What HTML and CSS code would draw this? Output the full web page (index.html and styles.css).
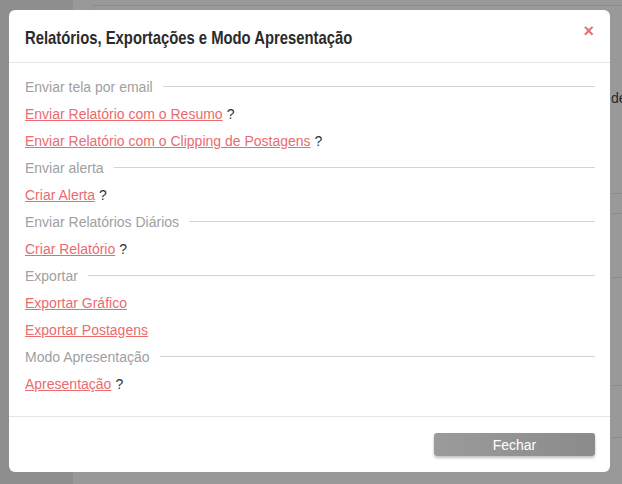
FILE: index.html
```html
<!DOCTYPE html>
<html lang="pt">
<head>
<meta charset="utf-8">
<title>Relatórios</title>
<link rel="stylesheet" href="styles.css">
</head>
<body>
<div class="page">
  <div class="side"></div>
  <div class="main">
    <div class="card">
      <div class="card-text">de</div>
      <div class="card-line l1"></div>
      <div class="card-line l2"></div>
      <div class="card-line l3"></div>
      <div class="card-line l4"></div>
      <div class="card-line l5"></div>
    </div>
  </div>
</div>
<div class="modal">
  <div class="modal-header">
    <h4 class="modal-title">Relatórios, Exportações e Modo Apresentação</h4>
    <span class="close">×</span>
  </div>
  <div class="modal-body">
    <div class="section"><span>Enviar tela por email</span><i class="rule"></i></div>
    <div class="row"><a class="link" href="#">Enviar Relatório com o Resumo</a> <span class="help">?</span></div>
    <div class="row"><a class="link" href="#">Enviar Relatório com o Clipping de Postagens</a> <span class="help">?</span></div>
    <div class="section"><span>Enviar alerta</span><i class="rule"></i></div>
    <div class="row"><a class="link" href="#">Criar Alerta</a> <span class="help">?</span></div>
    <div class="section"><span>Enviar Relatórios Diários</span><i class="rule"></i></div>
    <div class="row"><a class="link" href="#">Criar Relatório</a> <span class="help">?</span></div>
    <div class="section"><span>Exportar</span><i class="rule"></i></div>
    <div class="row"><a class="link" href="#">Exportar Gráfico</a></div>
    <div class="row"><a class="link" href="#">Exportar Postagens</a></div>
    <div class="section"><span>Modo Apresentação</span><i class="rule"></i></div>
    <div class="row"><a class="link" href="#">Apresentação</a> <span class="help">?</span></div>
  </div>
  <div class="modal-footer">
    <button class="btn">Fechar</button>
  </div>
</div>
</body>
</html>
```
FILE: styles.css
```css
html, body {
  margin: 0;
  padding: 0;
  height: 100%;
}
body {
  background: #8e8e8e;
  font-family: "Liberation Sans", Arial, sans-serif;
  overflow: hidden;
}
.page {
  display: flex;
  height: 484px;
}
.side {
  width: 73px;
  background: #8e8e8e;
}
.main {
  flex: 1;
  background: #999999;
  padding: 5px 0 0 20px;
}
.card {
  height: 460px;
  border-top: 1px solid #8c8c8c;
  border-left: 1px solid #8c8c8c;
  position: relative;
}
.card-text {
  position: absolute;
  left: 517px;
  top: 84px;
  font-size: 14px;
  color: #2a2a2a;
}
.card-line {
  position: absolute;
  left: 518px;
  right: 0;
  height: 1px;
  background: #8a8a8a;
}
.l1 { top: 187px; }
.l2 { top: 207px; }
.l3 { top: 271px; }
.l4 { top: 379px; }
.l5 { top: 431px; }

.modal {
  position: absolute;
  left: 9px;
  top: 10px;
  width: 601px;
  height: 462px;
  background: #fff;
  border-radius: 6px;
  display: flex;
  flex-direction: column;
  box-sizing: border-box;
}
.modal-header {
  height: 53px;
  box-sizing: border-box;
  border-bottom: 1px solid #e5e5e5;
  padding: 0 16px;
  display: flex;
  align-items: center;
  justify-content: space-between;
}
.modal-title {
  margin: 0;
  font-family: "Liberation Sans", Arial, sans-serif;
  font-weight: bold;
  font-size: 19px;
  color: #2b2b2b;
  padding-top: 3px;
  transform: scaleX(0.78);
  transform-origin: left center;
  white-space: nowrap;
  width: 330px;
}
.close {
  color: #ea6f74;
  font-size: 18px;
  font-weight: bold;
  align-self: flex-start;
  margin-top: 12px;
  margin-right: 0;
  line-height: 1;
}
.modal-body {
  padding: 10px 15px 0 16px;
  height: 354px;
  box-sizing: border-box;
  border-bottom: 1px solid #e5e5e5;
}
.section, .row {
  height: 27px;
  display: flex;
  align-items: center;
  font-size: 14px;
}
.section {
  color: #a0a0a0;
}
.rule {
  flex: 1;
  height: 1px;
  background: #d4d4d4;
  margin-left: 10px;
}
.link {
  color: #ea6b70;
  text-decoration: underline;
}
.help {
  color: #2c3440;
  margin-left: 4px;
}
.modal-footer {
  flex: 1;
  display: flex;
  justify-content: flex-end;
  align-items: flex-start;
  padding: 16px 15px 0 0;
}
.btn {
  width: 161px;
  height: 23px;
  border: none;
  border-radius: 3px;
  background: linear-gradient(to right, #9b9b9b, #8b8b8b);
  color: #fff;
  font-family: "Liberation Sans", Arial, sans-serif;
  font-size: 14px;
  box-shadow: 0 2px 3px rgba(0,0,0,0.25);
  padding: 0;
}
```
